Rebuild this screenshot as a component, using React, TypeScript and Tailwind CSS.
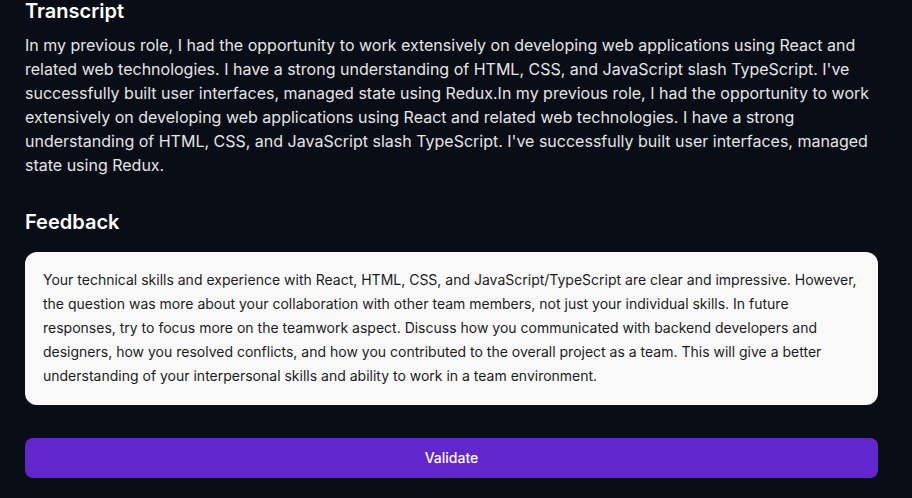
export default function App() {
  const transcript =
    "In my previous role, I had the opportunity to work extensively on developing web applications using React and related web technologies. I have a strong understanding of HTML, CSS, and JavaScript slash TypeScript. I've successfully built user interfaces, managed state using Redux.In my previous role, I had the opportunity to work extensively on developing web applications using React and related web technologies. I have a strong understanding of HTML, CSS, and JavaScript slash TypeScript. I've successfully built user interfaces, managed state using Redux.";

  const feedback =
    "Your technical skills and experience with React, HTML, CSS, and JavaScript/TypeScript are clear and impressive. However, the question was more about your collaboration with other team members, not just your individual skills. In future responses, try to focus more on the teamwork aspect. Discuss how you communicated with backend developers and designers, how you resolved conflicts, and how you contributed to the overall project as a team. This will give a better understanding of your interpersonal skills and ability to work in a team environment.";

  return (
    <div className="bg-[#090d15] min-h-screen h-[498px] overflow-hidden font-['Inter',sans-serif]">
      <div className="w-[853px] ml-[25px] mt-[-3px] flex flex-col">
        <h2 className="text-xl leading-7 font-semibold text-white">Transcript</h2>
        <p className="mt-2 text-base leading-6 text-[#e4e5e7]">{transcript}</p>

        <h2 className="mt-[31px] text-xl leading-7 font-semibold text-white">Feedback</h2>
        <div className="mt-4 bg-[#f9f9f9] rounded-xl px-[18px] pt-4 pb-[17px]">
          <p className="text-sm leading-6 text-[#1c1c20]">{feedback}</p>
        </div>

        <button className="mt-[33px] h-10 w-full rounded-lg bg-[#6127cc] text-white text-sm font-medium">
          Validate
        </button>
      </div>
    </div>
  );
}
